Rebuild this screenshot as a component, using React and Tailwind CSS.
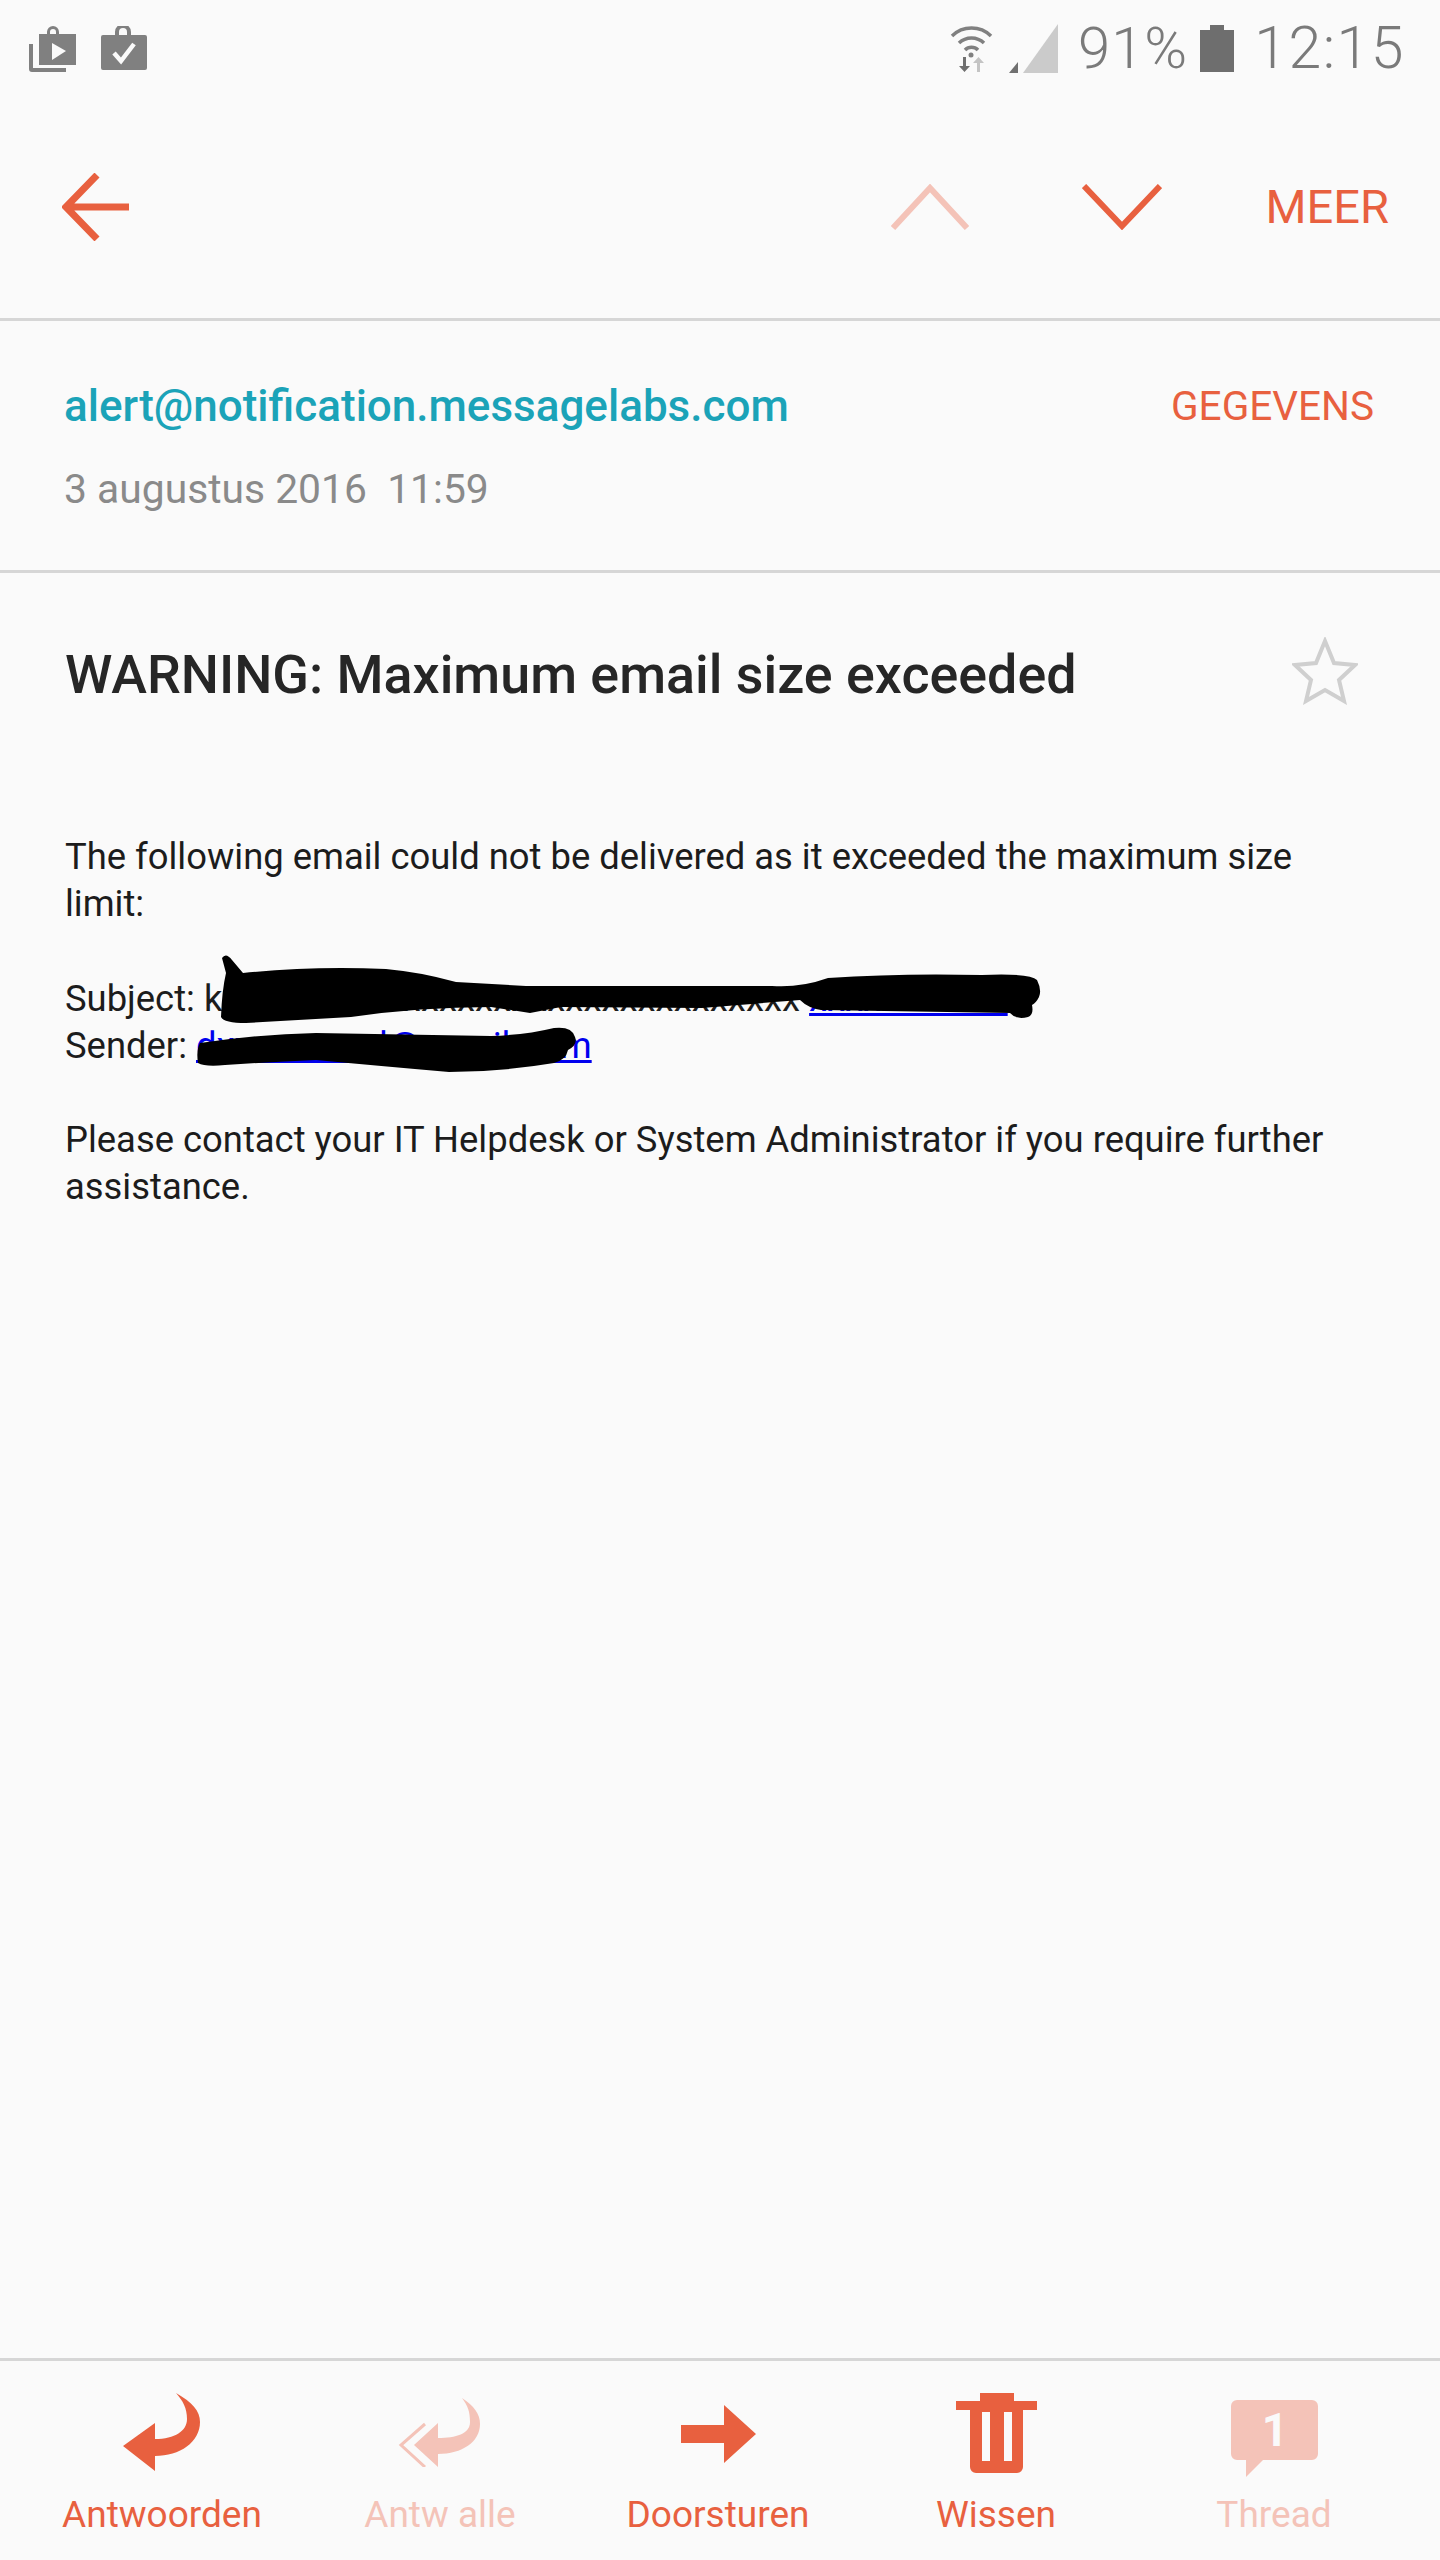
const ORANGE = '#e8603f';
const FADED = '#f4c3b8';

const BarItem = ({ label, faded, children }) => (
  <div className="flex flex-col items-center">
    <div className="h-[116px] w-full flex items-end justify-center">{children}</div>
    <span className={`mt-[16px] text-[37px] leading-[44px] ${faded ? 'text-[#f4c3b8]' : 'text-[#e8603f]'}`}>{label}</span>
  </div>
);

const StatusBar = () => (
  <div className="h-[96px] flex items-center justify-between pl-[29px] pr-[35px]">
    <div className="flex items-center gap-[25px]">
      <svg width="47" height="46" viewBox="0 0 47 46" className="mt-[2px]">
        <path d="M0 18h4v24h33v4H3a3 3 0 0 1-3-3z" fill="#808080" />
        <path d="M10 8h8V6a6 6 0 0 1 12 0v2h17v31H10z M21 8h6V6a3 3 0 0 0-6 0z" fill="#808080" fillRule="evenodd" />
        <path d="M23 17l14 8-14 9z" fill="#fafafa" />
      </svg>
      <svg width="46" height="44" viewBox="0 0 46 44">
        <path d="M2 9h12V6a8 8 0 0 1 16 0v3h14a2 2 0 0 1 2 2v31a2 2 0 0 1-2 2H2a2 2 0 0 1-2-2V11a2 2 0 0 1 2-2z M18 9h8V6a4 4 0 0 0-8 0z" fill="#808080" fillRule="evenodd" />
        <path d="M13 27l7 8 13-17" fill="none" stroke="#fafafa" strokeWidth="4.5" />
      </svg>
    </div>
    <div className="flex items-center text-[#7a7a7a]">
      <svg width="43" height="48" viewBox="0 0 43 48">
        <path d="M2 12a28 28 0 0 1 39 0" fill="none" stroke="#808080" strokeWidth="3.5" />
        <path d="M9 19a18 18 0 0 1 25 0" fill="none" stroke="#808080" strokeWidth="3.5" />
        <path d="M15 26a9 9 0 0 1 13 0" fill="none" stroke="#808080" strokeWidth="3.5" />
        <circle cx="21" cy="31" r="2.5" fill="#808080" />
        <path d="M13 33v9h-4l5.500 6 5.500-6h-4v-9z" fill="#707070" />
        <path d="M27 48v-9h-4l5.500-6 5.500 6h-4v9z" fill="#c4c4c4" />
      </svg>
      <svg width="49" height="49" viewBox="0 0 49 49" className="ml-[16px]">
        <path d="M49 0v49H14z" fill="#cbcbcb" />
        <path d="M9 38v11H0z" fill="#707070" />
      </svg>
      <span className="ml-[20px] text-[58px] leading-[60px] font-light tracking-[1px]">91%</span>
      <svg width="34" height="47" viewBox="0 0 34 47" className="ml-[12px]">
        <path d="M10 0h14v5h10v42H0V5h10z" fill="#6e6e6e" />
      </svg>
      <span className="ml-[20px] text-[59px] leading-[60px] font-light tracking-[1.5px]">12:15</span>
    </div>
  </div>
);

const Toolbar = () => (
  <div className="h-[225px] flex items-center justify-between pl-[62px] pr-[51px] border-b-[3px] border-[#d6d6d6]">
    <svg width="67" height="68" viewBox="0 0 67 68">
      <path d="M67 34H5M35 2L4 34l31 32" fill="none" stroke={ORANGE} strokeWidth="7" />
    </svg>
    <div className="flex items-center">
      <svg width="78" height="46" viewBox="0 0 78 46">
        <path d="M2 44L39 4l37 40" fill="none" stroke={FADED} strokeWidth="6" />
      </svg>
      <svg width="80" height="46" viewBox="0 0 80 46" className="ml-[113px]">
        <path d="M2 2l38 40 38-40" fill="none" stroke={ORANGE} strokeWidth="6" />
      </svg>
      <span className="ml-[104px] text-[47px] leading-[52px] text-[#e8603f]">MEER</span>
    </div>
  </div>
);

const SenderInfo = () => (
  <div className="h-[252px] pl-[64px] pr-[66px] pt-[61px] border-b-[3px] border-[#d6d6d6]">
    <div className="flex justify-between">
      <span className="text-[44px] leading-[48px] font-medium text-[#1ba3b8]">alert@notification.messagelabs.com</span>
      <span className="text-[40.500px] leading-[48px] text-[#e8603f]">GEGEVENS</span>
    </div>
    <p className="mt-[35px] text-[40.800px] leading-[48px] text-[#8a8a8a] whitespace-pre">3 augustus 2016  11:59</p>
  </div>
);

const MessageBody = () => (
  <div className="flex-1 pl-[65px] pr-[100px] text-[36.400px] leading-[47.300px] text-[#1c1c1c]">
    <p>The following email could not be delivered as it exceeded the maximum size limit:</p>
    <p className="mt-[47px]">
      Subject: kxxxxxxxxxxxxxxxxxxxxxxxxxxxxxxxx <a href="#" className="text-[#0000ee] underline">xxxxxxxxxxx</a>
      <br />
      Sender: <a href="#" className="text-[#0000ee] underline">dxxxxxxxxxl@gmail.com</a>
    </p>
    <p className="mt-[47px]">Please contact your IT Helpdesk or System Administrator if you require further assistance.</p>
  </div>
);

const BottomBar = () => (
  <div className="h-[202px] border-t-[3px] border-[#d6d6d6] grid grid-cols-5 pl-[23px] pr-[27px]">
    <BarItem label="Antwoorden">
      <svg width="77" height="78" viewBox="0 0 77 78" className="mb-[6px] -translate-x-[1px]">
        <path d="M53 0C69 9 77 18 77 29C77 49 57 63 32 63V78L0 53L32 30V46C52 46 64 38 64 26C64 15 60 8 53 0Z" fill={ORANGE} />
      </svg>
    </BarItem>
    <BarItem label="Antw alle" faded>
      <svg width="82" height="69" viewBox="0 0 82 69" className="mb-[10px] -translate-x-[1px]">
        <path d="M64 0C76 8 82 16 82 26C82 44 64 56 40 56V69L16 47L40 25V40C58 40 72 36 72 24C72 14 70 8 64 0Z" fill={FADED} />
        <path d="M27 26L3 47L27 69" fill="none" stroke={FADED} strokeWidth="3" />
      </svg>
    </BarItem>
    <BarItem label="Doorsturen">
      <svg width="75" height="58" viewBox="0 0 75 58" className="mb-[14px]">
        <path d="M0 20h43V0l32 29-32 29V38H0z" fill={ORANGE} />
      </svg>
    </BarItem>
    <BarItem label="Wissen">
      <svg width="81" height="80" viewBox="0 0 81 80" className="mb-[4px]">
        <path d="M24 0h34v8h23v9H67v57a6 6 0 0 1-6 6H20a6 6 0 0 1-6-6V17H0V8h24z" fill={ORANGE} />
        <path d="M26 19h8v49h-8zM48 19h8v49h-8z" fill="#fafafa" />
      </svg>
    </BarItem>
    <BarItem label="Thread" faded>
      <svg width="87" height="77" viewBox="0 0 87 77">
        <path d="M6 0h75a6 6 0 0 1 6 6v48a6 6 0 0 1-6 6H32L15 77V60H6a6 6 0 0 1-6-6V6a6 6 0 0 1 6-6z" fill={FADED} />
        <text x="44" y="46" textAnchor="middle" fontSize="46" fontWeight="700" fill="#fafafa">1</text>
      </svg>
    </BarItem>
  </div>
);

export default function App() {
  return (
    <div className="relative w-[1440px] h-[2560px] flex flex-col bg-[#fafafa] overflow-hidden font-['Roboto',sans-serif]">
      <StatusBar />
      <Toolbar />
      <SenderInfo />
      <div className="flex items-center justify-between pl-[65px] pr-[82px] pt-[72px] h-[132px]">
        <h1 className="text-[53.800px] leading-[60px] font-medium text-[#262626]">WARNING: Maximum email size exceeded</h1>
        <svg width="66" height="68" viewBox="0 0 66 68" className="mb-[8px]">
          <path d="M33 4l9 22 21 2-16 15 5 21-19-11-19 11 5-21L3 28l21-2z" fill="none" stroke="#cfcfcf" strokeWidth="4" />
        </svg>
      </div>
      <div className="h-[128px]" />
      <MessageBody />
      <BottomBar />

      {/* pen scribbles drawn over the redacted addresses */}
      <svg width="1440" height="2560" viewBox="0 0 1440 2560" className="absolute top-0 left-0 pointer-events-none">
        <path
          d="M222 958Q226 952 232 960L243 973Q310 966 386 969Q420 972 456 982L526 986L772 986Q800 988 828 978Q900 973 982 975Q1030 973 1037 980Q1042 990 1039 997Q1036 1003 1032 1005Q1034 1015 1028 1017Q1016 1020 1010 1013L821 1010Q808 1008 800 1000L702 1008L561 1007L530 1013L491 1007Q420 1007 351 1017L246 1023Q224 1023 221 1017Q222 990 226 973Z"
          fill="#000"
        />
        <path
          d="M200 1043Q260 1034 316 1033L491 1036Q525 1035 554 1028Q572 1026 575 1037Q578 1045 568 1050Q566 1060 554 1063Q500 1072 449 1072Q380 1066 316 1060Q270 1062 225 1065Q205 1067 198 1063Q196 1050 200 1043Z"
          fill="#000"
        />
      </svg>
    </div>
  );
}
